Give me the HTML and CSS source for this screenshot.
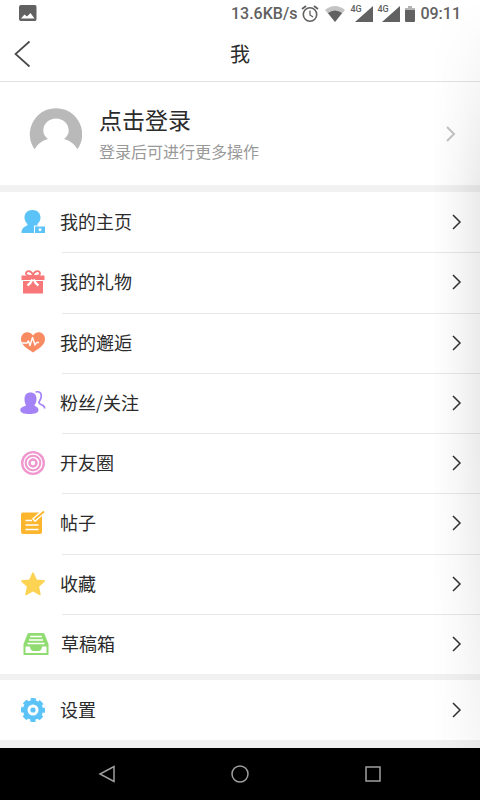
FILE: index.html
```html
<!DOCTYPE html>
<html lang="zh-CN">
<head>
<meta charset="utf-8">
<meta name="viewport" content="width=device-width, initial-scale=1">
<title>我</title>
<link rel="stylesheet" href="styles.css">
</head>
<body>
<div class="app">
  <div class="status">
    <svg class="status-photo" width="18" height="17" viewBox="0 0 18 17"><path fill="#616161" d="M2 0h14q1.500 0 1.500 2v12q0 2-1.500 2H2q-2 0-2-2V2q0-2 2-2z"/><path fill="#fff" d="M2 13.500l3.500-4 2.500 2L11.500 8l4 5.500z"/></svg>
    <div class="status-right">
      <span>13.6KB/s</span>
      <svg class="alarm" width="18" height="18" viewBox="0 0 18 18" fill="none" stroke="#616161"><circle cx="9" cy="9.500" r="6.700" stroke-width="1.600"/><path stroke-width="1.800" d="M1 4l4-3M17 4l-4-3"/><path stroke-width="1.300" d="M9 5.500V10l3 2"/></svg>
      <svg class="wifi" width="20" height="16" viewBox="0 0 20 16"><path fill="#c4c4c4" d="M0 4q10-8 20 0L10 16z"/><path fill="#616161" d="M3 7q7-5 14 0l-7 9z"/></svg>
      <span class="signal"><small>4G</small><svg width="18" height="16" viewBox="0 0 18 16"><path fill="#616161" d="M18 0v16H0z"/></svg></span>
      <span class="signal"><small>4G</small><svg width="18" height="16" viewBox="0 0 18 16"><path fill="#616161" d="M18 0v16H0z"/></svg></span>
      <svg class="battery" width="10" height="16" viewBox="0 0 10 16"><path fill="#b5b5b5" d="M3 0h4v2h3v3H0V2h3z"/><path fill="#616161" d="M0 4h10v11q0 1-1 1H1q-1 0-1-1z"/></svg>
      <span>09:11</span>
    </div>
  </div>

  <header class="header">
    <button class="back" type="button" aria-label="返回"><svg width="18" height="28" viewBox="0 0 18 28"><path fill="none" stroke="#4a4a4a" stroke-width="1.700" d="M15.500 1.500L1.500 14l14 12.500"/></svg></button>
    <h1>我</h1>
  </header>

  <main class="content">
    <a class="profile" href="#login">
      <svg class="avatar" width="54" height="54" viewBox="0 0 54 54"><path fill="#b9b9b9" d="M6.500 42.300A26.200 26.200 0 1 1 49.500 42.300Q45 34.500 36 32Q40.700 28.500 40.700 23.500C40.700 16.500 35 11.500 28 11.500S15.300 16.500 15.300 23.500Q15.300 28.500 20 32Q11 34.500 6.500 42.300z"/></svg>
      <span class="profile-text"><strong>点击登录</strong><span>登录后可进行更多操作</span></span>
      <svg class="chevron pale" width="10" height="16" viewBox="0 0 10 16"><path d="M1 1l7 7-7 7"/></svg>
    </a>

    <nav class="menu">
      <a class="row" href="#home">
        <svg class="icon" width="26" height="26" viewBox="0 0 26 26"><path fill="#5bc3f8" d="M12.500 1c5.200 0 8 3.500 8 7.500 0 3-1.300 4.700-2.800 6.200-.4.600-.2 1.300.3 1.800H14V24H1.500c0-4 2-5.800 5-7.200 1.500-.8 1.200-1.600.3-2.600C5.500 13 4.500 11 4.500 8.500c0-4 2.800-7.500 8-7.500z"/><path fill="#5bc3f8" d="M15 17.500h10V24H15z"/><path fill="#fff" d="M20 18.500l.7 1.300 1.300.2-1 1 .2 1.500-1.200-.7-1.200.7.200-1.500-1-1 1.300-.2z"/></svg>
        <span class="label">我的主页</span><svg class="chevron" width="10" height="16" viewBox="0 0 10 16"><path d="M1 1l7 7-7 7"/></svg></a>
      <a class="row" href="#gifts">
        <svg class="icon" width="26" height="26" viewBox="0 0 26 26"><path fill="#f87778" d="M1.500 6.500h23v4.500h-23zM3 12h20v12.500H3z"/><path fill="none" stroke="#f87778" stroke-width="1.800" d="M12.500 7Q6 7 6 4.500C6 1.500 11 .5 13 6c2-5.500 7-4.500 7-1.500Q20 7 13.500 7"/><path fill="none" stroke="#fff" stroke-width="2.200" d="M12.300 10.500Q11 14 7.500 16.500M13.700 10.500Q15 14 18.500 16.500"/></svg>
        <span class="label">我的礼物</span><svg class="chevron" width="10" height="16" viewBox="0 0 10 16"><path d="M1 1l7 7-7 7"/></svg></a>
      <a class="row" href="#encounters">
        <svg class="icon" width="26" height="26" viewBox="0 0 26 26"><path fill="#f98b63" d="M13 5.500C17-.5 25 2.500 25 9c0 5.500-5 9-12 13.500C6 18 1 14.500 1 9 1 2.500 9-.5 13 5.500z"/><path fill="none" stroke="#fff" stroke-width="1.400" stroke-linejoin="round" d="M0 13h7l1.500-2 1.500 4.500 2.500-8L15 15l1.500-2.500H19"/></svg>
        <span class="label">我的邂逅</span><svg class="chevron" width="10" height="16" viewBox="0 0 10 16"><path d="M1 1l7 7-7 7"/></svg></a>
      <a class="row" href="#fans">
        <svg class="icon" width="26" height="26" viewBox="0 0 26 26"><path fill="#a483f6" d="M10.500 2.500c4 0 6 2.500 6 6.500 0 3-.7 4.500-2 6-.3 1.500 4 1.500 4 5 0 3-4 4-9 4s-9.200-1-9.200-4c0-3.500 5.700-3.500 5.700-5C5 13.500 4.500 12 4.500 9c0-4 2-6.500 6-6.500z"/><path fill="none" stroke="#a483f6" stroke-width="1.700" d="M15.500 2c6.500-1.500 7 4.500 4 9-1.500 2 .5 3.500 2.500 4 2 .6 2.500 1 2.700 3.500"/></svg>
        <span class="label">粉丝/关注</span><svg class="chevron" width="10" height="16" viewBox="0 0 10 16"><path d="M1 1l7 7-7 7"/></svg></a>
      <a class="row" href="#circle">
        <svg class="icon" width="26" height="26" viewBox="0 0 26 26"><circle cx="13" cy="13" r="12" fill="#ef97ce"/><g fill="none" stroke="#fff"><circle cx="13" cy="13" r="9" stroke-width="1.300"/><circle cx="13" cy="13" r="5.500" stroke-width="1.500"/></g><circle cx="13" cy="13" r="2.200" fill="#fff"/></svg>
        <span class="label">开友圈</span><svg class="chevron" width="10" height="16" viewBox="0 0 10 16"><path d="M1 1l7 7-7 7"/></svg></a>
      <a class="row" href="#posts">
        <svg class="icon" width="26" height="26" viewBox="0 0 26 26"><rect x="1" y="2.500" width="21" height="21.500" rx="2" fill="#fbb62d"/><g fill="none" stroke="#fff"><path stroke-width="1.500" d="M5.500 10.500H12M5.500 15h13M5.500 19.500h13"/><path stroke-width="4.500" d="M13.500 10.500L24 1"/></g><path stroke="#fbb62d" stroke-width="1.800" d="M14.500 9.500L24 1.500"/></svg>
        <span class="label">帖子</span><svg class="chevron" width="10" height="16" viewBox="0 0 10 16"><path d="M1 1l7 7-7 7"/></svg></a>
      <a class="row" href="#favorites">
        <svg class="icon" width="26" height="26" viewBox="0 0 26 26"><path fill="#fcd352" stroke="#fcd352" stroke-width="1.500" stroke-linejoin="round" d="M13 2l3.300 7.200 8 .8-6 5.500 1.700 8L13 19.500 6 23.500l1.700-8-6-5.500 8-.8z"/></svg>
        <span class="label">收藏</span><svg class="chevron" width="10" height="16" viewBox="0 0 10 16"><path d="M1 1l7 7-7 7"/></svg></a>
      <a class="row drafts" href="#drafts">
        <svg class="icon" width="26" height="26" viewBox="0 0 26 26"><path fill="#90dc70" d="M6 2h14q1 0 1.500 1L25.500 13v11H.5V13L4.500 3Q5 2 6 2z"/><path fill="none" stroke="#fff" stroke-width="1.600" d="M7 5.500h12M6 9h14M4.500 12.500h17"/><path fill="#fff" d="M2.500 15.500H7q.5 4.500 3.500 4.500h5q3 0 3.500-4.500h4.500V22h-21z"/></svg>
        <span class="label">草稿箱</span><svg class="chevron" width="10" height="16" viewBox="0 0 10 16"><path d="M1 1l7 7-7 7"/></svg></a>
    </nav>

    <a class="row settings" href="#settings">
      <svg class="icon" width="26" height="26" viewBox="0 0 26 26"><circle cx="13" cy="13" r="7.800" fill="none" stroke="#5bc3f8" stroke-width="4.600"/><circle cx="13" cy="13" r="10.500" fill="none" stroke="#5bc3f8" stroke-width="3" stroke-dasharray="5.200 3.047" stroke-dashoffset="2.600"/><circle cx="13" cy="13" r="2.600" fill="#5bc3f8"/></svg>
      <span class="label">设置</span><svg class="chevron" width="10" height="16" viewBox="0 0 10 16"><path d="M1 1l7 7-7 7"/></svg></a>
  </main>

  <footer class="navbar">
    <button type="button" aria-label="后退"><svg width="18" height="18" viewBox="0 0 18 18"><path d="M16 1.500v15L2 9z"/></svg></button>
    <button type="button" aria-label="主屏幕"><svg width="18" height="18" viewBox="0 0 18 18"><circle cx="9" cy="9" r="8"/></svg></button>
    <button type="button" aria-label="最近任务"><svg width="18" height="18" viewBox="0 0 18 18"><path d="M2 2h14v14H2z"/></svg></button>
  </footer>
</div>
</body>
</html>
```

FILE: styles.css
```css
* { box-sizing: border-box; }

body {
  margin: 0;
  background: #fff;
  color: #2b2b2b;
  font-family: "Noto Sans CJK SC", sans-serif;
}

svg { display: block; flex: none; }
a { color: inherit; text-decoration: none; }
button { padding: 0; border: 0; background: none; }

.app {
  position: relative;
  display: flex;
  flex-direction: column;
  min-height: 100vh;
}

/* soft shade along the right edge */
.app::after {
  content: "";
  position: absolute;
  inset: 0 0 52px auto;
  width: 48px;
  background: linear-gradient(to right, rgba(0, 0, 0, 0), rgba(0, 0, 0, 0.03) 50%, rgba(0, 0, 0, 0.08));
  -webkit-mask-image: linear-gradient(to bottom, transparent, #000 25%, #000 60%, rgba(0, 0, 0, 0.4));
  mask-image: linear-gradient(to bottom, transparent, #000 25%, #000 60%, rgba(0, 0, 0, 0.4));
  pointer-events: none;
}

.status {
  display: flex;
  align-items: center;
  justify-content: space-between;
  height: 27px;
  padding: 0 19px;
  color: #616161;
  font: 500 16px/27px Roboto, sans-serif;
}

.status-right { display: flex; align-items: center; }
.alarm { margin-left: 4px; }
.wifi { margin: 0 5px 0 6px; }
.battery { margin: 0 5px; }
.signal { position: relative; padding-left: 5px; }
.signal + .signal { padding-left: 9px; }
.signal small {
  position: absolute;
  left: 0;
  top: -3px;
  font-size: 9px;
  line-height: 12px;
}
.signal + .signal small { left: 4px; }

.header {
  display: grid;
  grid-template-columns: 44px 1fr 44px;
  align-items: center;
  height: 55px;
  border-bottom: 1px solid #e2e2e2;
}
.back { width: 44px; height: 54px; padding-left: 14px; }
h1 {
  margin: 0;
  text-align: center;
  font-size: 20px;
  font-weight: 400;
  line-height: 54px;
}

.content {
  flex: 1;
  display: flex;
  flex-direction: column;
}

.profile {
  display: flex;
  align-items: center;
  height: 103px;
  padding: 0 24px 0 28px;
}
.profile-text {
  display: flex;
  flex: 1;
  flex-direction: column;
  margin-left: 17px;
  padding-bottom: 1px;
  color: #999;
  font-size: 16px;
  line-height: 29px;
}
.profile-text strong {
  color: #2b2b2b;
  font-size: 23px;
  font-weight: 400;
  line-height: 36px;
}

.menu {
  flex: 1;
  display: grid;
  grid-auto-rows: 1fr;
  border: solid #f1f1f1;
  border-width: 7px 0 6px;
}

.row {
  position: relative;
  display: flex;
  align-items: center;
  min-height: 60px;
  padding: 0 18px 0 20px;
}
.row .label {
  flex: 1;
  margin-left: 14px;
  padding-bottom: 2px;
  font-size: 18px;
  line-height: 28px;
}
.row + .row::before {
  content: "";
  position: absolute;
  top: 0;
  right: 0;
  left: 62px;
  height: 1px;
  background: #e8e8e8;
}
.drafts { padding-left: 23px; }
.drafts .label { margin-left: 12px; }
.settings {
  box-sizing: content-box;
  border-bottom: 8px solid #f1f1f1;
}

.chevron { fill: none; stroke: #333; stroke-width: 1.5px; }
.pale { stroke: #c4c4c4; stroke-width: 2px; }

.navbar {
  display: grid;
  grid-template-columns: repeat(3, 1fr);
  height: 52px;
  padding: 0 41px;
  background: #000;
}
.navbar button { display: grid; place-items: center; }
.navbar svg { fill: none; stroke: #a0a0a0; stroke-width: 1.5px; }
```
